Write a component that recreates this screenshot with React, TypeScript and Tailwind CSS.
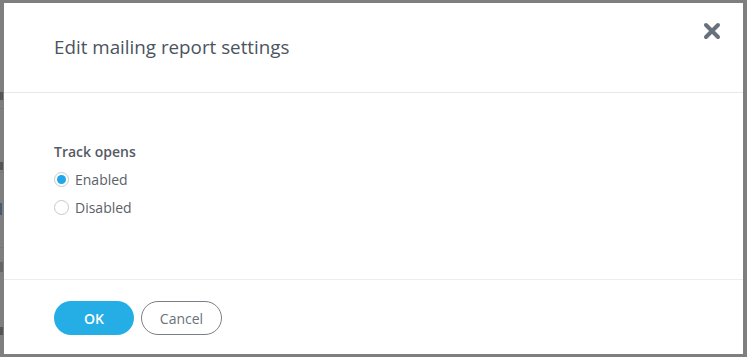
import React from "react";

export default function App() {
  return (
    <div
      className="relative w-[747px] h-[357px] overflow-hidden bg-[#7f7f7f]"
      style={{ fontFamily: '"Open Sans", sans-serif' }}
    >
      {/* faint page content behind the overlay */}
      <div className="absolute left-0 top-0 w-[4px] h-[357px]">
        <div className="absolute left-0 top-[92px] w-[3px] h-[8px] bg-[#555]" />
        <div className="absolute left-0 top-[108px] w-[4px] h-px bg-[#777]" />
        <div className="absolute left-0 top-[162px] w-[3px] h-[8px] bg-[#555]" />
        <div className="absolute left-0 top-[172px] w-[4px] h-px bg-[#777]" />
        <div className="absolute left-0 top-[203px] w-[2px] h-[12px] bg-[#4a5a70]" />
        <div className="absolute left-0 top-[247px] w-[4px] h-px bg-[#777]" />
        <div className="absolute left-0 top-[262px] w-[3px] h-[10px] bg-[#666]" />
        <div className="absolute left-0 top-[327px] w-[3px] h-[8px] bg-[#555]" />
      </div>

      <div className="absolute left-[4px] top-[3px] w-[739px] h-[351px] bg-white flex flex-col">
        {/* header */}
        <div className="relative h-[90px] shrink-0 border-b border-[#e8e8e8] flex items-start">
          <h2 className="ml-[50px] mt-[31px] text-[18.8px] leading-[26px] text-[#4b535e]">
            Edit mailing report settings
          </h2>
          <button className="absolute right-[22px] top-[19px] w-[18px] h-[18px] flex items-center justify-center">
            <svg width="18" height="18" viewBox="0 0 18 18">
              <path
                d="M3 3 L15 15 M15 3 L3 15"
                stroke="#67717b"
                strokeWidth="4"
                strokeLinecap="round"
              />
            </svg>
          </button>
        </div>

        {/* body */}
        <div className="h-[187px] shrink-0 border-b border-[#ededed] pl-[50px] pt-[49px]">
          <div className="text-[14px] leading-[20px] font-semibold text-[#555b63]">Track opens</div>
          <label className="flex items-center h-[20px] mt-[7px] text-[14px] text-[#5b6168]">
            <span className="w-[15px] h-[15px] rounded-full border border-[#c9c9c9] bg-white flex items-center justify-center">
              <span className="w-[9px] h-[9px] rounded-full bg-[#21a6e6]" />
            </span>
            <span className="ml-[6px]">Enabled</span>
          </label>
          <label className="flex items-center h-[20px] mt-[8px] text-[14px] text-[#5b6168]">
            <span className="w-[15px] h-[15px] rounded-full border border-[#c9c9c9] bg-white" />
            <span className="ml-[6px]">Disabled</span>
          </label>
        </div>

        {/* footer */}
        <div className="flex-1 pl-[50px] pt-[21px] flex items-start gap-[7px]">
          <button className="w-[80px] h-[34px] rounded-full bg-[#25ade6] text-white text-[14px] font-semibold">
            OK
          </button>
          <button className="w-[81px] h-[34px] rounded-full border border-[#7a7f85] bg-white text-[#6a7178] text-[14px]">
            Cancel
          </button>
        </div>
      </div>
    </div>
  );
}
